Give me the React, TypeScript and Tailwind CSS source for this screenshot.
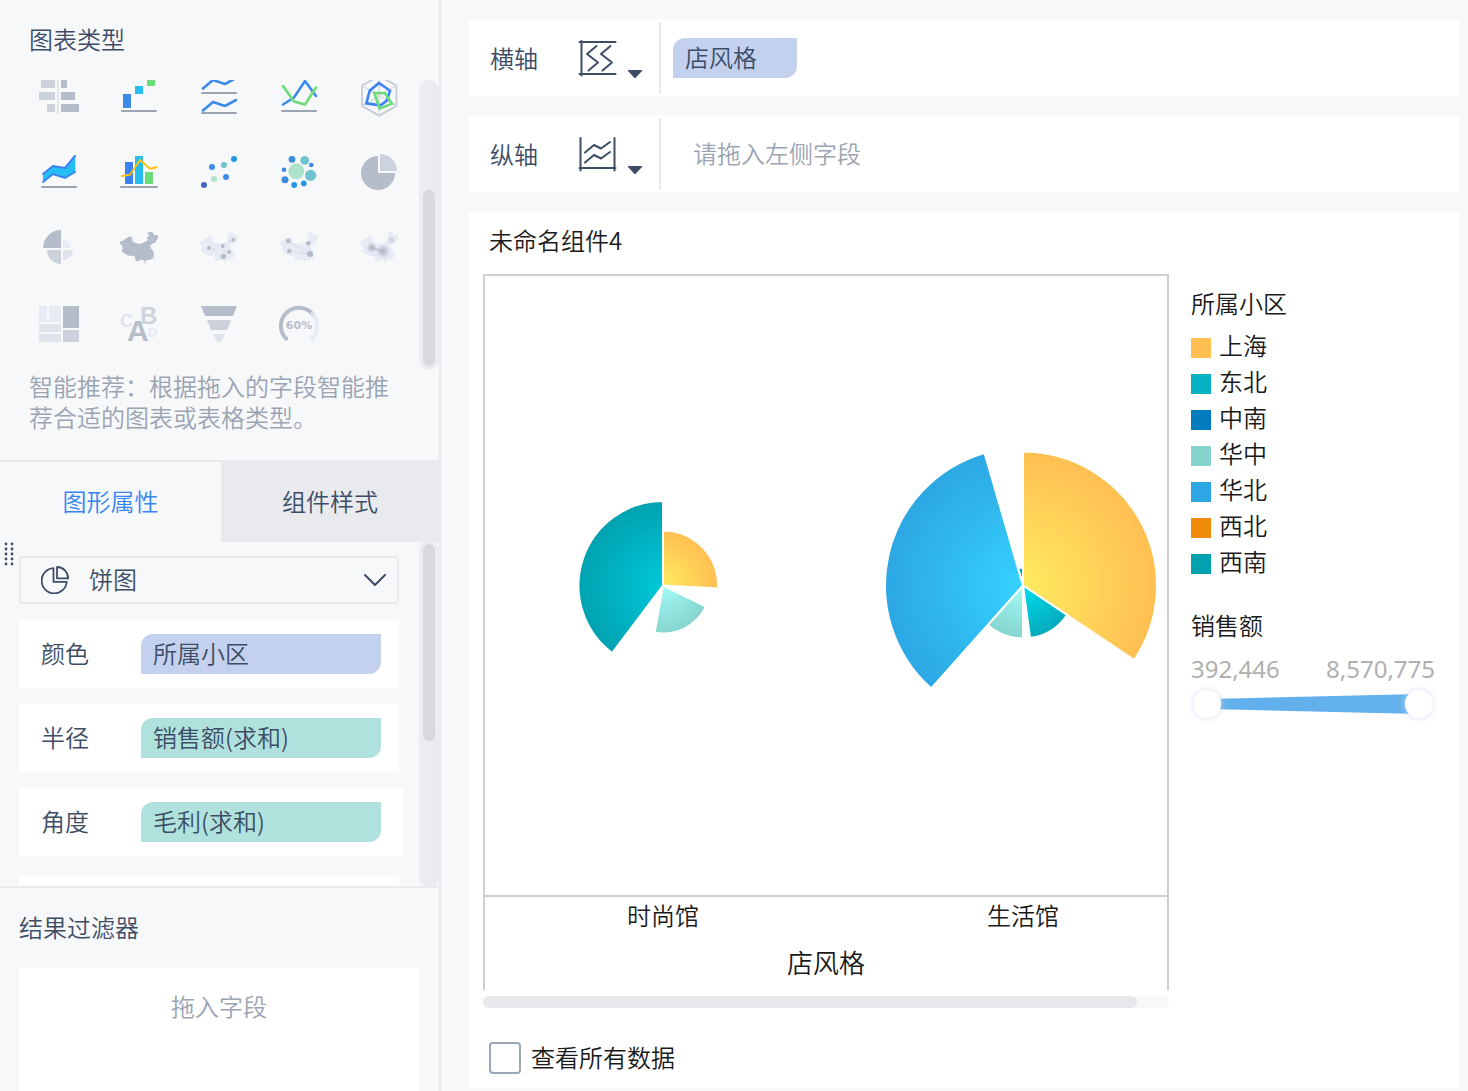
import { useState } from 'react'
import type { ReactNode } from 'react'
import clsx from 'clsx'

const MAP_OUTLINE =
  'M360 93L366 94L374 88L382 83L390 78L394 81L398 90L398 96L406 98L414 101L424 101L432 97L440 93L445 89L440 86L441 82L447 79L446 74L441 70L448 66L456 66L460 70L462 76L474 75L474 84L470 90L466 98L460 100L452 105L447 107L454 109L451 114L457 119L460 126L462 134L460 140L456 146L448 150L438 151L434 155L430 151L422 149L416 153L410 154L406 150L405 140L398 137L390 138L380 134L371 129L364 121L368 118L367 108L361 103Z M459 144L463 141L462 149Z M432 156L438 155L435 161Z'

function Icon({ viewBox = '0 0 40 40', children }: { viewBox?: string; children: ReactNode }) {
  return (
    <svg className="size-10 overflow-visible" viewBox={viewBox} fill="none" aria-hidden="true">
      {children}
    </svg>
  )
}

function Baseline({ y = 35, from = 3, to = 37 }: { y?: number; from?: number; to?: number }) {
  return <path d={`M${from} ${y}H${to}`} stroke="#9ba4b3" strokeWidth="2" strokeLinecap="round" />
}

const chartTypes: { name: string; icon: ReactNode }[] = [
  {
    name: '对比柱状图',
    icon: (
      <Icon>
        <path d="M2 2h14v10H2zM0 16h16v8H0zM8 28h8v8H8z" fill="#ccd3dd" />
        <path d="M22 2h6v10h-6zM22 16h14v8H22zM22 28h18v8H22z" fill="#b5bdca" />
        <path d="M18 2h2v36h-2z" fill="#e0e4eb" />
      </Icon>
    ),
  },
  {
    name: '瀑布图',
    icon: (
      <Icon>
        <path d="M4 18h8v14H4z" fill="#3d8be8" />
        <path d="M16 10h8v8h-8z" fill="#26bdf2" />
        <path d="M28 2h8v8h-8z" fill="#6bdc78" />
        <Baseline />
      </Icon>
    ),
  },
  {
    name: '范围面积图',
    icon: (
      <Icon>
        <path
          d="M4 12.5L14 4L26 8L37 2M4 34.5L14 26L26 30L37 24"
          stroke="#3d8be8"
          strokeWidth="2.6"
          strokeLinecap="round"
          strokeLinejoin="round"
        />
        <Baseline y={17} />
        <Baseline y={37} />
      </Icon>
    ),
  },
  {
    name: '折线图',
    icon: (
      <Icon>
        <g strokeWidth="2.6" strokeLinecap="round" strokeLinejoin="round">
          <path d="M4 28.5L15 21.5L26 5L37 20" stroke="#3d8be8" />
          <path d="M4 10L15 25.5L26 28.5L37 11.5" stroke="#6bdc78" />
        </g>
        <Baseline />
      </Icon>
    ),
  },
  {
    name: '雷达图',
    icon: (
      <Icon>
        <path d="M20 0L37.4 9.6V30L20 39.6L3 30V9.6Z" stroke="#c5cad4" strokeWidth="1.8" />
        <path d="M20 0V39M3 9.6L37.4 30M37.4 9.6L3 30" stroke="#dadee5" strokeWidth="1.6" />
        <path d="M20 7L31 14.7L28 24.5L21.5 29.3L7.3 27.3L10.7 14.7Z" stroke="#3b82f6" strokeWidth="2.6" />
        <path d="M15.3 17H25.7L33 27.7L20.7 32.5Z" stroke="#6bdc78" strokeWidth="2.6" />
      </Icon>
    ),
  },
  {
    name: '面积图',
    icon: (
      <Icon>
        <path d="M4 22L14 14L26 16L36.3 4V20L26 26L14 22L4 30Z" fill="#26bdf2" />
        <path d="M4 22L14 14L26 16L36 4M4 30L14 22L26 26L36 20" stroke="#3b82f6" strokeWidth="2" strokeLinecap="round" />
        <Baseline />
      </Icon>
    ),
  },
  {
    name: '组合图',
    icon: (
      <Icon>
        <path d="M6 10h8v22H6z" fill="#3b82f6" />
        <path d="M16 4h8v28h-8z" fill="#26bdf2" />
        <path d="M26 20h8v12h-8z" fill="#6bdc78" />
        <path d="M3 24L11 22.7L21 8L31 16.7L37.5 15.3" stroke="#ffc107" strokeWidth="2" strokeLinecap="round" />
        <Baseline from={2} to={38} />
      </Icon>
    ),
  },
  {
    name: '散点图',
    icon: (
      <Icon>
        <circle cx="13" cy="15" r="3" fill="#3d8be8" />
        <circle cx="15" cy="27" r="3" fill="#aee3cb" />
        <circle cx="5" cy="33" r="3" fill="#4267c0" />
        <circle cx="25" cy="13" r="3" fill="#6fc3d0" />
        <circle cx="35" cy="7" r="3" fill="#2196e3" />
        <circle cx="27" cy="25" r="3" fill="#3d8be8" />
      </Icon>
    ),
  },
  {
    name: '聚合气泡图',
    icon: (
      <Icon>
        <circle cx="17.3" cy="19.3" r="8" fill="#aee3cb" />
        <circle cx="13" cy="7.3" r="3.4" fill="#3a8ade" />
        <circle cx="25.7" cy="8.4" r="4.4" fill="#6fc3d0" />
        <circle cx="32.3" cy="13" r="2.3" fill="#3a8ade" />
        <circle cx="5" cy="17.7" r="2.3" fill="#3a8ade" />
        <circle cx="6" cy="27.7" r="3.5" fill="#3a8ade" />
        <circle cx="15.2" cy="33" r="2.9" fill="#2196e3" />
        <circle cx="24.8" cy="31.4" r="2.8" fill="#2196e3" />
        <circle cx="31.6" cy="23.4" r="5.6" fill="#6fc3d0" />
      </Icon>
    ),
  },
  {
    name: '饼图',
    icon: (
      <Icon>
        <path d="M19 21V4A17 17 0 1 0 36 21Z" fill="#b5bdca" />
        <path d="M21 19V2A17 17 0 0 1 38 19Z" fill="#ccd2de" />
      </Icon>
    ),
  },
  {
    name: '多层饼图',
    icon: (
      <Icon>
        <path d="M22 20V2A18 18 0 0 0 4 20Z" fill="#b5bdca" />
        <path d="M24 20V12A8 8 0 0 1 32 20Z" fill="#e6ebf5" />
        <path d="M22 22V36A14 14 0 0 1 8 22Z" fill="#ccd2dc" />
        <path d="M24 22V32A10 10 0 0 0 34 22Z" fill="#e0e4ec" />
      </Icon>
    ),
  },
  {
    name: '区域地图',
    icon: (
      <Icon viewBox="357 54 120 120">
        <path d={MAP_OUTLINE} fill="#b5bdca" />
      </Icon>
    ),
  },
  {
    name: '点地图',
    icon: (
      <Icon viewBox="357 54 120 120">
        <path d={MAP_OUTLINE} fill="#e6ebf5" />
        <g fill="#b5bdca">
          <circle cx="387" cy="114" r="6" />
          <circle cx="460" cy="89" r="6" />
          <circle cx="428" cy="108" r="6" />
          <circle cx="447" cy="126" r="6" />
          <circle cx="430" cy="139" r="8" />
        </g>
        <g fill="#ccd2dc">
          <circle cx="401" cy="117" r="3" />
          <circle cx="450" cy="93" r="3" />
          <circle cx="432" cy="123" r="3" />
        </g>
      </Icon>
    ),
  },
  {
    name: '流向地图',
    icon: (
      <Icon viewBox="357 54 120 120">
        <path d={MAP_OUTLINE} fill="#e6ebf5" />
        <path d="M385 93L450 132L388 123M445 100L450 132" stroke="#d4d9e3" strokeWidth="3" />
        <g fill="#b5bdca">
          <circle cx="385" cy="93" r="7" />
          <circle cx="445" cy="100" r="7" />
          <circle cx="388" cy="123" r="7" />
          <circle cx="450" cy="132" r="9" />
        </g>
      </Icon>
    ),
  },
  {
    name: '热力地图',
    icon: (
      <Icon viewBox="357 54 120 120">
        <defs>
          <radialGradient id="heat">
            <stop offset="0.2" stopColor="#b5bdca" />
            <stop offset="1" stopColor="#b5bdca" stopOpacity="0" />
          </radialGradient>
        </defs>
        <path d={MAP_OUTLINE} fill="#e6ebf5" />
        <path d="M395 115L429 124" stroke="#c9d0dc" strokeWidth="8" strokeLinecap="round" />
        <circle cx="395" cy="113" r="16" fill="url(#heat)" />
        <circle cx="429" cy="124" r="21" fill="url(#heat)" />
        <circle cx="454" cy="90" r="12" fill="url(#heat)" opacity="0.6" />
      </Icon>
    ),
  },
  {
    name: '矩形树图',
    icon: (
      <Icon>
        <path d="M0 2h8v16H0zM10 2h12v16H10z" fill="#e6ebf5" />
        <path d="M24 2h16v22H24z" fill="#b5bdca" />
        <path d="M0 20h22v8H0zM0 30h22v8H0z" fill="#e0e4ec" />
        <path d="M24 26h16v12H24z" fill="#ccd2dc" />
      </Icon>
    ),
  },
  {
    name: '词云',
    icon: (
      <Icon>
        <g fontFamily="Liberation Sans, sans-serif" fontWeight="700">
          <text x="1" y="23" fontSize="18" fill="#e0e4ec">C</text>
          <text x="21" y="20" fontSize="24" fill="#ccd2dc">B</text>
          <text x="29" y="33" fontSize="13" fill="#e6ebf5">D</text>
          <text x="8" y="37" fontSize="30" fill="#b5bdca">A</text>
        </g>
      </Icon>
    ),
  },
  {
    name: '漏斗图',
    icon: (
      <Icon>
        <path d="M2 2H38L34 12H6Z" fill="#b5bdca" />
        <path d="M8 16H32L28 26H12Z" fill="#ccd2dc" />
        <path d="M14 30H26L22 38H18Z" fill="#e0e4ec" />
      </Icon>
    ),
  },
  {
    name: '仪表盘',
    icon: (
      <Icon>
        <path d="M33 9.5A18 18 0 0 1 32.7 34.7" stroke="#e6ebf5" strokeWidth="4" strokeLinecap="round" />
        <path d="M7.3 34.7A18 18 0 1 1 33 9.5" stroke="#b5bdca" strokeWidth="4" strokeLinecap="round" />
        <circle cx="33" cy="9.5" r="1.2" fill="#f7f8fa" />
        <text
          x="20"
          y="25"
          textAnchor="middle"
          fontFamily="DejaVu Sans, sans-serif"
          fontWeight="700"
          fontSize="11"
          fill="#b5bdca"
        >
          60%
        </text>
      </Icon>
    ),
  },
]

const fieldRows = [
  { label: '颜色', field: '所属小区', kind: 'dimension', className: 'mr-5' },
  { label: '半径', field: '销售额(求和)', kind: 'measure', className: 'mr-5' },
  { label: '角度', field: '毛利(求和)', kind: 'measure', className: 'mr-4' },
]

const legend = [
  { name: '上海', swatch: 'bg-[#ffbf52]' },
  { name: '东北', swatch: 'bg-[#05b1c2]' },
  { name: '中南', swatch: 'bg-[#007bbb]' },
  { name: '华中', swatch: 'bg-[#86d4ce]' },
  { name: '华北', swatch: 'bg-[#2ca7e3]' },
  { name: '西北', swatch: 'bg-[#f08c0a]' },
  { name: '西南', swatch: 'bg-[#00a2b0]' },
]

// start and end are degrees, clockwise from twelve o'clock
interface Slice {
  name: string
  start: number
  end: number
  radius: number
  inner: string
  outer: string
}

const pies: { store: string; slices: Slice[] }[] = [
  {
    store: '时尚馆',
    slices: [
      { name: '上海', start: 0, end: 93, radius: 55, inner: '#ffeb60', outer: '#ffbf52' },
      { name: '华中', start: 116, end: 190, radius: 48, inner: '#a2fbf7', outer: '#86d4ce' },
      { name: '西南', start: 217, end: 360, radius: 84.5, inner: '#00c8d9', outer: '#00a2b0' },
    ],
  },
  {
    store: '生活馆',
    slices: [
      { name: '西南', start: 344, end: 360, radius: 18, inner: '#00c8d9', outer: '#00a2b0' },
      { name: '上海', start: 0, end: 123.8, radius: 134, inner: '#ffeb60', outer: '#ffbf52' },
      { name: '东北', start: 123.8, end: 172.3, radius: 53, inner: '#00deef', outer: '#05aabb' },
      { name: '华中', start: 180, end: 221.7, radius: 53, inner: '#a2fbf7', outer: '#86d4ce' },
      { name: '华北', start: 221.7, end: 343.8, radius: 138, inner: '#35d2ff', outer: '#2ca7e3' },
    ],
  },
]

const CX = 180
const CY = 309.5

function slicePath({ start, end, radius }: Slice) {
  const point = (deg: number) => {
    const rad = (deg * Math.PI) / 180
    return `${(CX + radius * Math.sin(rad)).toFixed(2)} ${(CY - radius * Math.cos(rad)).toFixed(2)}`
  }
  return `M${CX} ${CY}L${point(start)}A${radius} ${radius} 0 ${end - start > 180 ? 1 : 0} 1 ${point(end)}Z`
}

function Pie({ id, store, slices }: { id: string; store: string; slices: Slice[] }) {
  return (
    <svg className="h-[619px] w-[360px] shrink-0" viewBox="0 0 360 619" role="img" aria-label={store}>
      {slices.map((slice, i) => (
        <g key={slice.name}>
          <radialGradient id={`${id}-${i}`} gradientUnits="userSpaceOnUse" cx={CX} cy={CY} r={slice.radius}>
            <stop offset="0" stopColor={slice.inner} />
            <stop offset="1" stopColor={slice.outer} />
          </radialGradient>
          <path d={slicePath(slice)} fill={`url(#${id}-${i})`} stroke="#fff" strokeWidth="2" />
        </g>
      ))}
    </svg>
  )
}

function Pill({ kind, className, children }: { kind: string; className?: string; children: ReactNode }) {
  return (
    <button
      type="button"
      className={clsx(
        'h-10 rounded-tl-xl rounded-br-xl px-3 pb-0.5 text-left',
        kind === 'dimension' ? 'bg-[#c3d1ee]' : 'bg-[#afe2dc]',
        className,
      )}
    >
      {children}
    </button>
  )
}

function AxisRow({ label, icon, children }: { label: string; icon: ReactNode; children: ReactNode }) {
  return (
    <section className="flex h-[76px] items-center bg-white py-0.5">
      <h2 className="w-[109px] pl-[21px]">{label}</h2>
      <button type="button" aria-label={`${label}设置`} className="flex items-end">
        <svg
          className="size-10"
          viewBox="0 0 40 40"
          fill="none"
          stroke="#3d4d66"
          strokeWidth="2"
          strokeLinecap="round"
          strokeLinejoin="round"
        >
          {icon}
        </svg>
        <svg className="ml-2.5 h-2 w-3.5" viewBox="0 0 14 8" fill="#3d4d66">
          <path d="M0 0H14V1L7.5 8H6.5L0 1Z" />
        </svg>
      </button>
      <div className="ml-[17px] flex flex-1 items-center self-stretch border-l-2 border-[#e8eaed]">{children}</div>
    </section>
  )
}

function ChartTypePanel() {
  return (
    <section className="h-[460px]">
      <h2 className="px-[29px] pt-[23px] leading-8">图表类型</h2>
      <div className="mt-[25px] flex h-[290px] justify-between overflow-hidden">
        <div className="-mt-1 ml-[39px] grid auto-rows-[40px] grid-cols-[repeat(5,40px)] gap-x-10 gap-y-9">
          {chartTypes.map(({ name, icon }) => (
            <button key={name} type="button" title={name} aria-label={name}>
              {icon}
            </button>
          ))}
        </div>
        <div className="flex w-5 flex-col justify-end rounded-full bg-[#ebecef] p-1">
          <div className="h-[176px] rounded-full bg-[#d8d9dd]" />
        </div>
      </div>
      <p className="pr-10 pl-[29px] leading-[31px] text-[#9ba4b3]">
        智能推荐：根据拖入的字段智能推荐合适的图表或表格类型。
      </p>
    </section>
  )
}

function PropertyPanel() {
  return (
    <section className="relative flex h-[344px]">
      {/* Resize handle */}
      <svg className="absolute top-0 left-1 h-6 w-3" viewBox="0 0 12 24" fill="#3d4d66">
        {[2, 8].map((x) =>
          [2, 7, 12, 17, 22].map((y) => <circle key={`${x}-${y}`} cx={x} cy={y} r="1.4" />),
        )}
      </svg>
      <div className="flex-1 overflow-hidden pt-3.5 pl-[19px]">
        <div className="relative mr-5">
          <svg
            className="pointer-events-none absolute top-2.5 left-[22px] size-7"
            viewBox="0 0 28 28"
            fill="none"
            stroke="#3d4d66"
            strokeWidth="1.8"
            strokeLinejoin="round"
          >
            <path d="M12.5 2.2A12.6 12.6 0 1 0 25.8 15.8H12.5Z" />
            <path d="M16 1V12.4H27.2A11.4 11.4 0 0 0 16 1Z" />
          </svg>
          <select
            aria-label="图形"
            className="h-12 w-full appearance-none rounded border-2 border-[#e8eaed] bg-transparent pb-0.5 pl-[68px]"
          >
            <option>饼图</option>
          </select>
          <svg
            className="pointer-events-none absolute top-[18px] right-3 h-3 w-6"
            viewBox="0 0 24 12"
            fill="none"
            stroke="#3d4d66"
            strokeWidth="2"
            strokeLinecap="round"
            strokeLinejoin="round"
          >
            <path d="M2 1L12 11L22 1" />
          </svg>
        </div>
        {fieldRows.map(({ label, field, kind, className }) => (
          <div key={label} className={clsx('mt-4 flex h-[68px] items-center bg-white pl-[22px]', className)}>
            <span className="w-[100px] pb-0.5">{label}</span>
            <Pill kind={kind} className="w-60">
              {field}
            </Pill>
          </div>
        ))}
        <div className="mt-5 mr-5 h-[68px] bg-white" />
      </div>
      <div className="-my-0.5 w-5 rounded-full bg-[#ebecef] p-1">
        <div className="h-[197px] rounded-full bg-[#d8d9dd]" />
      </div>
    </section>
  )
}

const thumbStyles =
  'pointer-events-none absolute inset-0 w-full appearance-none bg-transparent [&::-webkit-slider-thumb]:pointer-events-auto [&::-webkit-slider-thumb]:size-7 [&::-webkit-slider-thumb]:appearance-none [&::-webkit-slider-thumb]:rounded-full [&::-webkit-slider-thumb]:bg-white [&::-webkit-slider-thumb]:shadow-[0_0_6px_#d5dced]'

function SizeLegend() {
  return (
    <div className="mt-[30px]">
      <h3 className="leading-8">销售额</h3>
      <div className="mt-3 flex justify-between font-['Noto_Sans'] leading-8 font-normal text-[#b0b0b0]">
        <span>392,446</span>
        <span>8,570,775</span>
      </div>
      <div className="relative mx-0.5 mt-[3px] h-8">
        <svg className="h-8 w-full" viewBox="0 0 240 32" preserveAspectRatio="none">
          <path d="M14 11L226 6V26L14 21Z" fill="#62b0ec" />
        </svg>
        <input type="range" aria-label="最小半径" min={0} max={100} defaultValue={0} className={thumbStyles} />
        <input type="range" aria-label="最大半径" min={0} max={100} defaultValue={100} className={thumbStyles} />
      </div>
    </div>
  )
}

export default function App() {
  const [tab, setTab] = useState('图形属性')

  return (
    <div className="flex min-h-screen bg-[#f7f8fa] font-['Noto_Sans_CJK_SC',sans-serif] text-2xl font-[350] text-[#3d4d66]">
      <aside className="flex w-[441px] shrink-0 flex-col border-r-2 border-[#e8eaed]">
        <ChartTypePanel />
        <div role="tablist" className="flex h-[82px]">
          {['图形属性', '组件样式'].map((name) => (
            <button
              key={name}
              type="button"
              role="tab"
              aria-selected={tab === name}
              onClick={() => setTab(name)}
              className={clsx(
                'border-t-2 border-[#e8eaed] pb-0.5 first:w-[221px] last:flex-1',
                tab === name ? 'text-[#3685f2]' : 'bg-[#e8eaed]',
              )}
            >
              {name}
            </button>
          ))}
        </div>
        <PropertyPanel />
        <section className="relative flex flex-1 flex-col border-t-2 border-[#e8eaed] pt-[23px] pr-5 pl-[19px]">
          <h2 className="leading-8">结果过滤器</h2>
          <div className="mt-[25px] flex-1 bg-white pt-[22px] text-center leading-8 text-[#9ba4b3]">拖入字段</div>
        </section>
      </aside>

      <main className="flex min-w-0 flex-1 flex-col gap-5 pt-5 pr-[9px] pb-[3px] pl-7">
        <AxisRow
          label="横轴"
          icon={
            <path d="M1.5 4H37.5M3.5 3V37.5M1.5 36H37.5M18.5 8L9 16L20 24.5L10.5 32.5M32.5 8L23 16L34 24.5L24.5 32.5" />
          }
        >
          <Pill kind="dimension" className="ml-3 w-[124px]">
            店风格
          </Pill>
        </AxisRow>
        <AxisRow
          label="纵轴"
          icon={
            <path d="M2.5 4V36.5M36.5 4V36.5M1.5 34H37.5M7 18.5L16 11L23 14.5L32 8M7 28.5L16 21L23 24.5L32 18" />
          }
        >
          <span className="ml-8 pb-0.5 text-[#9ba4b3]">请拖入左侧字段</span>
        </AxisRow>

        <section className="flex-1 bg-white pt-3 text-[#1a1a1a]">
          <h2 className="px-5 leading-8">未命名组件4</h2>
          <div className="mt-[18px] flex gap-[22px] pr-6 pl-3.5">
            <div className="min-w-0 flex-1">
              <div className="overflow-hidden border-2 border-b-0 border-[#cfcfcf]">
                <div className="-ml-0.5 flex">
                  {pies.map(({ store, slices }, i) => (
                    <Pie key={store} id={`pie${i}`} store={store} slices={slices} />
                  ))}
                </div>
                <div className="border-t-2 border-[#cfcfcf]">
                  <div className="-ml-0.5 flex leading-9">
                    {pies.map(({ store }) => (
                      <span key={store} className="w-[360px] shrink-0 text-center">
                        {store}
                      </span>
                    ))}
                  </div>
                  <div className="text-center text-[26px] leading-[57px]">店风格</div>
                </div>
              </div>
              <div className="mt-1.5 h-3 rounded-full bg-[#f8f8f8] pr-8">
                <div className="h-3 rounded-full bg-[#e6e8ec]" />
              </div>
            </div>

            <div className="w-[244px] shrink-0 pt-[13px]">
              <h3 className="leading-8">所属小区</h3>
              <ul className="mt-2">
                {legend.map(({ name, swatch }) => (
                  <li key={name} className="flex h-9 items-center gap-2">
                    <span className={clsx('mt-1.5 size-5', swatch)} />
                    {name}
                  </li>
                ))}
              </ul>
              <SizeLegend />
            </div>
          </div>
          <label className="mt-[33px] flex w-fit items-center gap-2.5 pl-5">
            <input type="checkbox" className="size-8 appearance-none rounded border-2 border-[#9ba7b7]" />
            <span className="pb-0.5">查看所有数据</span>
          </label>
        </section>
      </main>
    </div>
  )
}
